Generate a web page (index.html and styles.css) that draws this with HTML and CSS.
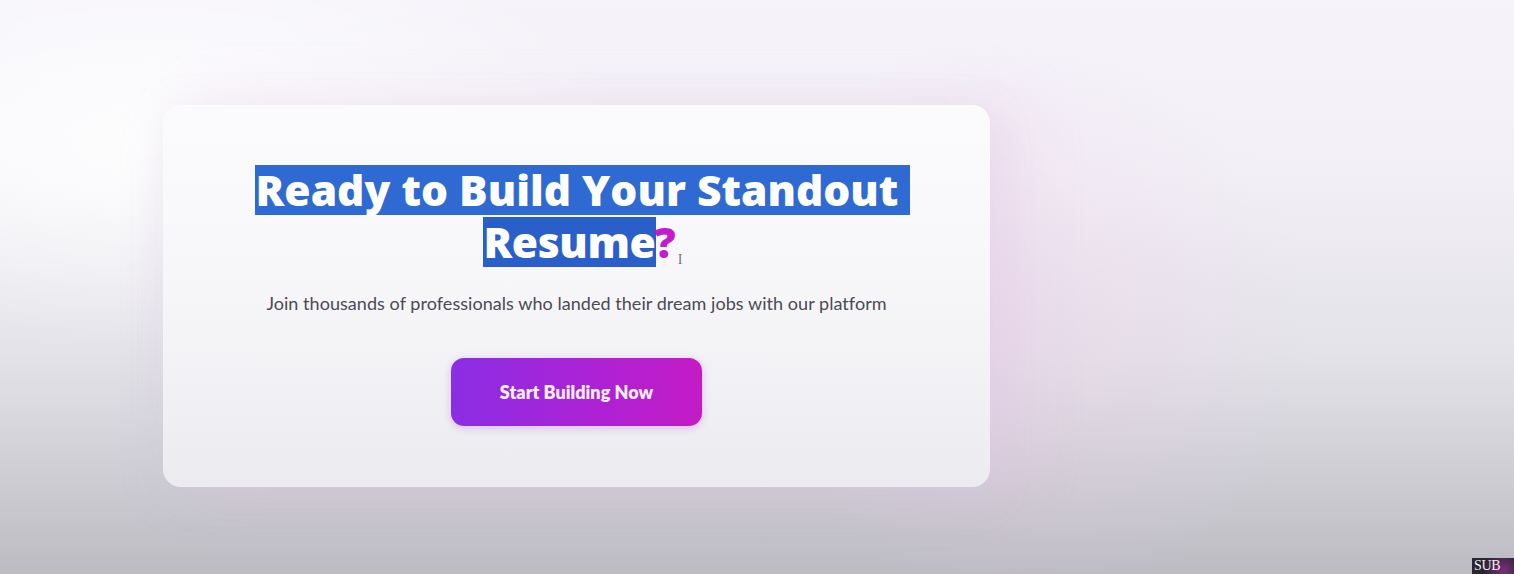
FILE: index.html
```html
<!DOCTYPE html>
<html lang="en">
<head>
<meta charset="utf-8">
<title>Ready to Build Your Standout Resume?</title>
<link rel="stylesheet" href="styles.css">
</head>
<body>
<main class="page">
  <section class="cta-card">
    <h1 class="cta-title"><span class="sel">Ready to Build Your Standout&nbsp;</span><br><span class="sel sel-dark">Resume</span><span class="qmark">?</span><span class="ibeam">I</span></h1>
    <p class="cta-sub">Join thousands of professionals who landed their dream jobs with our platform</p>
    <a class="cta-btn" href="#">Start Building Now</a>
  </section>
  <div class="watermark">SUB</div>
</main>
</body>
</html>
```
FILE: styles.css
```css
* { box-sizing: border-box; }
html, body { margin: 0; height: 100%; }
body {
  font-family: "Lato", "Noto Sans", sans-serif;
  overflow: hidden;
}
.page {
  position: relative;
  width: 1514px;
  height: 574px;
  padding: 105px 0 0 163px;
  background:
    radial-gradient(ellipse 700px 300px at 10% 25%, rgba(255,255,255,0.9), rgba(255,255,255,0) 70%),
    radial-gradient(ellipse 400px 420px at 68% 55%, rgba(238,205,236,0.35), rgba(238,205,236,0) 70%),
    linear-gradient(180deg, #f6f4fa 0%, #f2f0f6 30%, #e3e2e8 62%, #cfced5 82%, #bcbbc2 100%);
}
.cta-card {
  width: 827px;
  height: 382px;
  border-radius: 18px;
  background: linear-gradient(180deg, #fbfbfd 0%, #f7f7fa 45%, #ececf0 100%);
  box-shadow: 30px 0 60px rgba(236, 196, 232, 0.3), 0 10px 40px rgba(200, 196, 215, 0.25);
  padding: 59px 40px 0 40px;
  display: flex;
  flex-direction: column;
  align-items: center;
}
.cta-title {
  margin: 0 0 0 12px;
  font-family: "Open Sans", "Lato", sans-serif;
  font-size: 42.5px;
  line-height: 52px;
  font-weight: 800;
  text-align: center;
  color: #ffffff;
}
.sel {
  display: inline-block;
  line-height: 50px;
  background: #2f6ad2;
  padding: 0 1px;
}
.sel-dark { background: #2a5fc9; margin-right: -2px; letter-spacing: -0.4px; }
.qmark { color: #c41ccc; }
.ibeam {
  display: inline-block;
  font-family: "Liberation Serif", serif;
  font-weight: 400;
  font-size: 14px;
  color: #777;
  margin-left: 2px;
  vertical-align: -6px;
  line-height: 1;
}
.cta-sub {
  margin: 24px 0 0 0;
  font-size: 18px;
  color: #4b4a55;
  font-weight: 400;
  letter-spacing: 0.05px;
}
.cta-btn {
  margin-top: 44px;
  width: 251px;
  height: 68px;
  border-radius: 13px;
  display: flex;
  align-items: center;
  justify-content: center;
  text-decoration: none;
  color: #f6eefa;
  font-weight: 800;
  font-size: 18px;
  background: linear-gradient(90deg, #8a2ee4 0%, #a624d8 45%, #c41bc6 100%);
  box-shadow: 0 2px 8px rgba(160, 40, 200, 0.25);
}
.watermark {
  position: absolute;
  right: 0;
  bottom: 0;
  width: 42px;
  height: 16px;
  background: radial-gradient(circle at 75% 80%, #7a2e7c 0%, #2a2530 60%);
  color: #f2eef4;
  font-family: "Liberation Serif", serif;
  font-size: 14px;
  line-height: 16px;
  padding-left: 2px;
  letter-spacing: -0.3px;
}
```
